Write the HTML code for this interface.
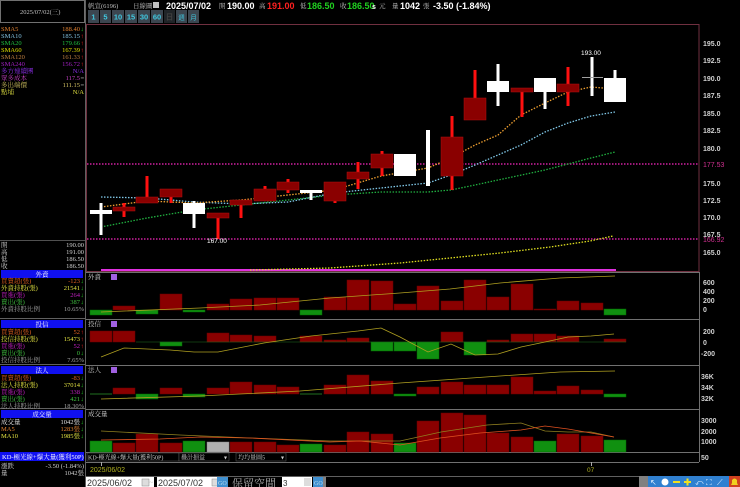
<!DOCTYPE html>
<html><head><meta charset="utf-8">
<style>
html,body{margin:0;padding:0;background:#000;width:740px;height:487px;overflow:hidden}
svg{display:block;font-family:"Liberation Serif","Noto Serif CJK TC",serif;font-size:6.5px}
.b{font-family:"Liberation Sans","Noto Sans CJK TC",sans-serif;font-weight:bold;font-size:9px}
.ax{font-family:"Liberation Sans",sans-serif;font-weight:bold;font-size:7px;fill:#d0d0d0}
</style></head><body>
<svg width="740" height="487" viewBox="0 0 740 487" xmlns="http://www.w3.org/2000/svg">
<rect width="740" height="487" fill="#000"/>
<rect x="0.5" y="0.5" width="84" height="22" fill="#000" stroke="#707070"/>
<text x="20" y="14" fill="#c0c0c0">2025/07/02(三)</text>
<line x1="85.5" y1="0" x2="85.5" y2="487" stroke="#606060"/>
<g text-anchor="start">
<text x="1" y="31" fill="#e08030">SMA5</text><text x="1" y="38" fill="#80c0e0">SMA10</text>
<text x="1" y="45" fill="#20c040">SMA20</text><text x="1" y="52" fill="#e0e000">SMA60</text>
<text x="1" y="59" fill="#c08040">SMA120</text><text x="1" y="66" fill="#a020c0">SMA240</text>
<text x="1" y="73" fill="#9030f0">多方連續團</text><text x="1" y="80" fill="#c040c0">眾多成本</text>
<text x="1" y="87" fill="#d0c060">多出端價</text><text x="1" y="94" fill="#e0e040">點埔</text>
</g>
<g text-anchor="end">
<text x="80" y="31" fill="#e08030">188.40</text><text x="80" y="38" fill="#80c0e0">185.15</text>
<text x="80" y="45" fill="#20c040">179.66</text><text x="80" y="52" fill="#e0e000">167.39</text>
<text x="80" y="59" fill="#c08040">161.33</text><text x="80" y="66" fill="#a020c0">156.72</text>
<text x="84" y="73" fill="#9030f0">N/A</text><text x="80" y="80" fill="#c040c0">117.5</text>
<text x="80" y="87" fill="#d0c060">111.15</text><text x="84" y="94" fill="#e0e040">N/A</text>
</g>
<g>
<text x="80.5" y="31" fill="#20d020">↓</text>
<text x="80.5" y="38" fill="#ff2020">↑</text><text x="80.5" y="45" fill="#ff2020">↑</text>
<text x="80.5" y="52" fill="#ff2020">↑</text><text x="80.5" y="59" fill="#ff2020">↑</text>
<text x="80.5" y="66" fill="#ff2020">↑</text><text x="80.5" y="80" fill="#c0c0c0">=</text><text x="80.5" y="87" fill="#c0c0c0">=</text>
</g>
<line x1="0" y1="240.5" x2="85" y2="240.5" stroke="#505050"/>
<g fill="#d0d0d0">
<text x="1" y="247">開</text><text x="1" y="254">高</text><text x="1" y="261">低</text><text x="1" y="268">收</text>
<g text-anchor="end"><text x="84" y="247">190.00</text><text x="84" y="254">191.00</text><text x="84" y="261">186.50</text><text x="84" y="268">186.50</text></g>
</g>
<g>
<rect x="1" y="270" width="82" height="8" fill="#1010f0"/><text x="42" y="276.5" fill="#fff" text-anchor="middle">外資</text>
<rect x="1" y="320" width="82" height="8" fill="#1010f0"/><text x="42" y="326.5" fill="#fff" text-anchor="middle">投信</text>
<rect x="1" y="366" width="82" height="8" fill="#1010f0"/><text x="42" y="372.5" fill="#fff" text-anchor="middle">法人</text>
<rect x="1" y="410" width="82" height="8" fill="#1010f0"/><text x="42" y="416.5" fill="#fff" text-anchor="middle">成交量</text>
</g>
<line x1="0" y1="318.5" x2="85" y2="318.5" stroke="#606060"/>
<line x1="0" y1="364.5" x2="85" y2="364.5" stroke="#606060"/>
<line x1="0" y1="408.5" x2="85" y2="408.5" stroke="#606060"/>
<g>
<text x="1" y="283" fill="#e06020">買賣超(張)</text><text x="1" y="290" fill="#e0e040">外資持股(張)</text>
<text x="1" y="297" fill="#c020c0">買進(張)</text><text x="1" y="304" fill="#40c040">賣出(張)</text><text x="1" y="311" fill="#a0a0a0">外資持股比例</text>
<g text-anchor="end"><text x="80" y="283" fill="#e06020">-123</text><text x="80" y="290" fill="#e0e040">21541</text>
<text x="80" y="297" fill="#c020c0">264</text><text x="80" y="304" fill="#40c040">387</text><text x="84" y="311" fill="#a0a0a0">10.65%</text></g>
<g fill="#20d020"><text x="80.5" y="283">↓</text><text x="80.5" y="290">↓</text><text x="80.5" y="297">↓</text><text x="80.5" y="304">↓</text></g>
</g>
<g>
<text x="1" y="334" fill="#e06020">買賣超(張)</text><text x="1" y="341" fill="#e0e040">投信持股(張)</text>
<text x="1" y="348" fill="#c020c0">買進(張)</text><text x="1" y="355" fill="#40c040">賣出(張)</text><text x="1" y="362" fill="#a0a0a0">投信持股比例</text>
<g text-anchor="end"><text x="80" y="334" fill="#e06020">52</text><text x="80" y="341" fill="#e0e040">15473</text>
<text x="80" y="348" fill="#c020c0">52</text><text x="80" y="355" fill="#40c040">0</text><text x="84" y="362" fill="#a0a0a0">7.65%</text></g>
<g><text x="80.5" y="334" fill="#ff2020">↑</text><text x="80.5" y="341" fill="#ff2020">↑</text><text x="80.5" y="348" fill="#ff2020">↑</text><text x="80.5" y="355" fill="#20d020">↓</text></g>
</g>
<g>
<text x="1" y="380" fill="#e06020">買賣超(張)</text><text x="1" y="387" fill="#e0e040">法人持股(張)</text>
<text x="1" y="394" fill="#c020c0">買進(張)</text><text x="1" y="401" fill="#40c040">賣出(張)</text><text x="1" y="408" fill="#a0a0a0">法人持股比例</text>
<g text-anchor="end"><text x="80" y="380" fill="#e06020">-83</text><text x="80" y="387" fill="#e0e040">37014</text>
<text x="80" y="394" fill="#c020c0">338</text><text x="80" y="401" fill="#40c040">421</text><text x="84" y="408" fill="#a0a0a0">18.30%</text></g>
<g fill="#20d020"><text x="80.5" y="380">↓</text><text x="80.5" y="387">↓</text><text x="80.5" y="394">↓</text><text x="80.5" y="401">↓</text></g>
</g>
<g>
<text x="1" y="424" fill="#e0e0e0">成交量</text><text x="1" y="431" fill="#e08030">MA5</text><text x="1" y="438" fill="#e0e040">MA10</text>
<g text-anchor="end"><text x="80" y="424" fill="#e0e0e0">1042張</text><text x="80" y="431" fill="#e08030">1283張</text><text x="80" y="438" fill="#e0e040">1985張</text></g>
<g fill="#20d020"><text x="80.5" y="424">↓</text><text x="80.5" y="431">↓</text><text x="80.5" y="438">↓</text></g>
</g>
<rect x="0" y="452" width="84" height="9" fill="#1010f0"/>
<text x="2" y="459" fill="#fff">KD-極光線+爆大量(獲利50P)</text>
<text x="1" y="468" fill="#d0d0d0">漲跌</text><text x="84" y="468" fill="#d0d0d0" text-anchor="end">-3.50 (-1.84%)</text>
<text x="1" y="475" fill="#d0d0d0">量</text><text x="84" y="475" fill="#d0d0d0" text-anchor="end">1042張</text>

<text x="88" y="8" fill="#c0c0c0">帆宣(6196)</text>
<text x="133" y="8" fill="#c0c0c0">日線圖</text>
<rect x="153" y="2" width="6" height="6" fill="#c0c0c0"/>
<text x="166" y="9" class="b" fill="#fff">2025/07/02</text>
<text x="219" y="8" fill="#c0c0c0">開</text><text x="227" y="9" class="b" fill="#fff">190.00</text>
<text x="259" y="8" fill="#c0c0c0">高</text><text x="267" y="9" class="b" fill="#ff2020">191.00</text>
<text x="300" y="8" fill="#c0c0c0">低</text><text x="307" y="9" class="b" fill="#20d020">186.50</text>
<text x="340" y="8" fill="#c0c0c0">收</text><text x="347" y="9" class="b" fill="#20d020">186.50</text>
<text x="372" y="9" class="b" style="font-size:7px" fill="#fff">s</text><text x="379" y="8" fill="#c0c0c0">元</text>
<text x="392" y="8" fill="#c0c0c0">量</text><text x="400" y="9" class="b" fill="#fff">1042</text>
<text x="423" y="8" fill="#c0c0c0">張</text><text x="433" y="9" class="b" fill="#fff">-3.50 (-1.84%)</text>
<g fill="#3c4650">
<rect x="88" y="10" width="11" height="13"/><rect x="100" y="10" width="11" height="13"/><rect x="112" y="10" width="12" height="13"/>
<rect x="125" y="10" width="12" height="13"/><rect x="138" y="10" width="12" height="13"/><rect x="151" y="10" width="12" height="13"/>
<rect x="164" y="10" width="11" height="13" fill="#202428"/><rect x="176" y="10" width="11" height="13"/><rect x="188" y="10" width="11" height="13"/>
</g>
<g fill="#40c8e0" font-family="Liberation Sans,sans-serif" font-weight="bold" font-size="7.5" text-anchor="middle">
<text x="93.5" y="19.5">1</text><text x="105.5" y="19.5">5</text><text x="118" y="19.5">10</text><text x="131" y="19.5">15</text>
<text x="144" y="19.5">30</text><text x="157" y="19.5">60</text><text x="169.5" y="19.5" fill="#404040">日</text>
<text x="181.5" y="19.5" font-size="6.5" font-weight="normal">週</text><text x="193.5" y="19.5" font-size="6.5" font-weight="normal">月</text>
</g>
<rect x="86.5" y="24.5" width="612.5" height="247" fill="none" stroke="#703040"/>
<g>
<text x="703" y="46" class="ax">195.0</text><text x="703" y="63" class="ax">192.5</text><text x="703" y="81" class="ax">190.0</text>
<text x="703" y="98" class="ax">187.5</text><text x="703" y="116" class="ax">185.0</text><text x="703" y="133" class="ax">182.5</text>
<text x="703" y="151" class="ax">180.0</text><text x="703" y="167" class="ax" style="fill:#d03090;font-weight:normal">177.53</text>
<text x="703" y="186" class="ax">175.0</text><text x="703" y="203" class="ax">172.5</text><text x="703" y="220" class="ax">170.0</text>
<text x="703" y="237" class="ax">167.5</text><text x="703" y="242" class="ax" style="fill:#d03090;font-weight:normal">166.92</text>
<text x="703" y="255" class="ax">165.0</text>
<text x="703" y="285" class="ax">600</text><text x="703" y="294" class="ax">400</text><text x="703" y="303" class="ax">200</text><text x="703" y="312" class="ax">0</text>
<text x="703" y="334" class="ax">200</text><text x="703" y="345" class="ax">0</text><text x="701" y="356" class="ax">-200</text>
<text x="701" y="379" class="ax">36K</text><text x="701" y="390" class="ax">34K</text><text x="701" y="401" class="ax">32K</text>
<text x="701" y="423" class="ax">3000</text><text x="701" y="434" class="ax">2000</text><text x="701" y="444" class="ax">1000</text>
<text x="701" y="460" class="ax">50</text>
</g>
<line x1="87" y1="164" x2="699" y2="164" stroke="#d020a0" stroke-width="1.5" stroke-dasharray="1.5 1.5"/>
<line x1="87" y1="239" x2="699" y2="239" stroke="#d020a0" stroke-width="1.5" stroke-dasharray="1.5 1.5"/>
<line x1="101" y1="270" x2="616" y2="270" stroke="#e030e0" stroke-width="2"/>
<polyline fill="none" stroke="#e0e020" stroke-width="1.3" stroke-dasharray="1.5 1.5" points="250,270 330,268 400,263 450,258 500,253 550,247 590,241 613,236"/>
<polyline fill="none" stroke="#20b040" stroke-width="1.3" stroke-dasharray="1.5 1.5" points="101,227 147,218 194,210 241,205 288,200 334,195 381,192 428,192 451,190 475,185 498,180 545,170 591,158 615,152"/>
<polyline fill="none" stroke="#80c8e8" stroke-width="1.3" stroke-dasharray="1.5 1.5" points="101,197 147,198 194,202 241,204 288,202 334,193 381,188 428,183 451,175 475,165 498,155 521,145 545,132 568,123 591,116 615,112"/>
<polyline fill="none" stroke="#f0a030" stroke-width="1.3" stroke-dasharray="1.5 1.5" points="101,207 147,201 194,203 241,200 288,195 334,190 381,176 428,168 451,158 475,145 498,135 521,115 545,103 568,92 591,87 615,89"/>
<g fill="#ff1010">
<rect x="145.5" y="176" width="3" height="27"/><rect x="122.5" y="203" width="3" height="14"/>
<rect x="169.5" y="189" width="3" height="14"/><rect x="216.5" y="213" width="3" height="26"/>
<rect x="239.5" y="200" width="3" height="18"/><rect x="263.5" y="186" width="3" height="15"/>
<rect x="286.5" y="179" width="3" height="14"/><rect x="333.5" y="182" width="3" height="21"/>
<rect x="356.5" y="162" width="3" height="27"/><rect x="380.5" y="151" width="3" height="25"/>
<rect x="450.5" y="116" width="3" height="74"/><rect x="473.5" y="70" width="3" height="50"/>
<rect x="520.5" y="88" width="3" height="29"/><rect x="566.5" y="67" width="3" height="39"/>
</g>
<g fill="#8a0000" stroke="#b01010" stroke-width="0.5">
<rect x="113" y="207" width="22" height="4"/><rect x="136" y="197" width="22" height="6"/>
<rect x="160" y="189" width="22" height="8"/><rect x="207" y="213" width="22" height="5"/>
<rect x="230" y="200" width="22" height="5"/><rect x="254" y="189" width="22" height="12"/>
<rect x="277" y="182" width="22" height="8"/><rect x="324" y="182" width="22" height="19"/>
<rect x="347" y="172" width="22" height="7"/><rect x="371" y="154" width="22" height="14"/>
<rect x="441" y="137" width="22" height="39"/><rect x="464" y="98" width="22" height="22"/>
<rect x="511" y="88" width="22" height="4"/><rect x="557" y="84" width="22" height="8"/>
</g>
<g fill="#fff">
<rect x="99.5" y="203" width="3" height="32"/><rect x="90" y="210" width="22" height="4"/>
<rect x="192.5" y="201" width="3" height="27"/><rect x="183" y="203" width="22" height="11"/>
<rect x="309.5" y="190" width="3" height="10"/><rect x="300" y="190" width="22" height="3"/>
<rect x="394" y="154" width="22" height="22"/>
<rect x="426" y="130" width="4" height="56"/>
<rect x="496.5" y="64" width="3" height="42"/><rect x="487" y="81" width="22" height="11"/>
<rect x="543.5" y="78" width="3" height="31"/><rect x="534" y="78" width="22" height="14"/>
<rect x="590.5" y="57" width="3" height="39"/>
<rect x="613.5" y="70" width="3" height="10"/><rect x="604" y="78" width="22" height="24"/>
</g>
<line x1="582" y1="77.5" x2="603" y2="77.5" stroke="#a0a0a0"/>
<text x="581" y="55" fill="#fff" font-family="Liberation Sans,sans-serif" font-size="6.5">193.00</text>
<text x="207" y="243" fill="#fff" font-family="Liberation Sans,sans-serif" font-size="6.5">167.00</text>

<g stroke="#707070">
<line x1="86" y1="272.5" x2="699" y2="272.5"/><line x1="86" y1="319.5" x2="699" y2="319.5"/>
<line x1="86" y1="365.5" x2="699" y2="365.5"/><line x1="86" y1="409.5" x2="699" y2="409.5"/>
<line x1="86" y1="452.5" x2="699" y2="452.5"/><line x1="86" y1="462.5" x2="699" y2="462.5"/>
<line x1="699.5" y1="272" x2="699.5" y2="462"/>
</g>
<g fill="#d0d0d0">
<text x="88" y="279">外資</text><text x="88" y="326">投信</text><text x="88" y="372">法人</text><text x="88" y="416">成交量</text>
</g>
<g fill="#a060e0"><rect x="111" y="274" width="6" height="6"/><rect x="111" y="321" width="6" height="6"/><rect x="111" y="367" width="6" height="6"/></g>

<g stroke="#600" stroke-width="0.5">
<g fill="#8a0000">
<rect x="113" y="306" width="22" height="4"/><rect x="160" y="294" width="22" height="16"/>
<rect x="207" y="304" width="22" height="6"/><rect x="230" y="299" width="22" height="11"/>
<rect x="254" y="298" width="22" height="12"/><rect x="277" y="298" width="22" height="12"/>
<rect x="324" y="297" width="22" height="13"/><rect x="347" y="280" width="22" height="30"/>
<rect x="371" y="281" width="22" height="29"/><rect x="394" y="304" width="22" height="6"/>
<rect x="417" y="286" width="22" height="24"/><rect x="441" y="301" width="22" height="9"/>
<rect x="464" y="280" width="22" height="30"/><rect x="487" y="297" width="22" height="13"/>
<rect x="511" y="284" width="22" height="26"/><rect x="534" y="309" width="22" height="1"/>
<rect x="557" y="301" width="22" height="9"/><rect x="581" y="303" width="22" height="7"/>
</g>
<g fill="#109010" stroke="#060">
<rect x="90" y="310" width="22" height="5"/><rect x="136" y="310" width="22" height="4"/>
<rect x="183" y="310" width="22" height="2"/><rect x="300" y="310" width="22" height="5"/>
<rect x="604" y="309" width="22" height="6"/>
</g>
</g>
<polyline fill="none" stroke="#b0a020" stroke-width="0.8" points="101,312 200,308 260,305 330,298 400,293 450,289 500,283 560,278 615,276"/>
<g stroke="#600" stroke-width="0.5">
<g fill="#8a0000">
<rect x="90" y="331" width="22" height="11"/><rect x="113" y="331" width="22" height="11"/>
<rect x="207" y="333" width="22" height="9"/><rect x="230" y="335" width="22" height="7"/>
<rect x="254" y="336" width="22" height="6"/><rect x="300" y="336" width="22" height="6"/>
<rect x="324" y="340" width="22" height="2"/><rect x="347" y="338" width="22" height="4"/>
<rect x="441" y="332" width="22" height="10"/><rect x="487" y="340" width="22" height="2"/>
<rect x="511" y="334" width="22" height="8"/><rect x="534" y="334" width="22" height="8"/>
<rect x="557" y="336" width="22" height="6"/><rect x="604" y="339" width="22" height="3"/>
</g>
<g fill="#109010" stroke="#060">
<rect x="160" y="342" width="22" height="4"/><rect x="371" y="342" width="22" height="9"/>
<rect x="394" y="342" width="22" height="9"/><rect x="417" y="342" width="22" height="17"/>
<rect x="464" y="342" width="22" height="13"/>
</g>
</g>
<line x1="136" y1="342" x2="626" y2="342" stroke="#207020" stroke-width="0.6"/>
<polyline fill="none" stroke="#b0a020" stroke-width="0.8" points="101,357 124,348 170,350 194,352 218,352 264,343 311,336 358,331 381,328 400,337 428,352 451,344 475,355 498,354 521,347 545,342 568,337 591,336 614,334"/>
<g stroke="#600" stroke-width="0.5">
<g fill="#8a0000">
<rect x="113" y="388" width="22" height="6"/><rect x="160" y="388" width="22" height="6"/>
<rect x="207" y="388" width="22" height="6"/><rect x="230" y="382" width="22" height="12"/>
<rect x="254" y="385" width="22" height="9"/><rect x="277" y="387" width="22" height="7"/>
<rect x="324" y="385" width="22" height="9"/><rect x="347" y="375" width="22" height="19"/>
<rect x="371" y="381" width="22" height="13"/><rect x="417" y="387" width="22" height="7"/>
<rect x="441" y="382" width="22" height="12"/><rect x="464" y="385" width="22" height="9"/>
<rect x="487" y="385" width="22" height="9"/><rect x="511" y="377" width="22" height="17"/>
<rect x="534" y="391" width="22" height="3"/><rect x="557" y="386" width="22" height="8"/>
<rect x="581" y="390" width="22" height="4"/>
</g>
<g fill="#109010" stroke="#060">
<rect x="136" y="394" width="22" height="5"/><rect x="183" y="394" width="22" height="3"/>
<rect x="394" y="394" width="22" height="2"/><rect x="604" y="394" width="22" height="3"/>
</g>
</g>
<line x1="90" y1="394" x2="112" y2="394" stroke="#207020"/><line x1="300" y1="394" x2="322" y2="394" stroke="#207020"/>
<polyline fill="none" stroke="#b0a020" stroke-width="0.8" points="101,399 200,396 300,391 400,383 500,376 560,372 615,371"/>
<g stroke="#600" stroke-width="0.5">
<g fill="#8a0000">
<rect x="113" y="443" width="22" height="9"/><rect x="136" y="434" width="22" height="18"/>
<rect x="160" y="443" width="22" height="9"/><rect x="230" y="442" width="22" height="10"/>
<rect x="254" y="442" width="22" height="10"/><rect x="277" y="445" width="22" height="7"/>
<rect x="324" y="445" width="22" height="7"/><rect x="347" y="432" width="22" height="20"/>
<rect x="371" y="434" width="22" height="18"/><rect x="417" y="421" width="22" height="31"/>
<rect x="441" y="413" width="22" height="39"/><rect x="464" y="415" width="22" height="37"/>
<rect x="487" y="433" width="22" height="19"/><rect x="511" y="437" width="22" height="15"/>
<rect x="557" y="434" width="22" height="18"/><rect x="581" y="436" width="22" height="16"/>
</g>
<g fill="#109010" stroke="#060">
<rect x="90" y="441" width="22" height="11"/><rect x="183" y="441" width="22" height="11"/>
<rect x="300" y="444" width="22" height="8"/><rect x="394" y="443" width="22" height="9"/>
<rect x="534" y="441" width="22" height="11"/><rect x="604" y="440" width="22" height="12"/>
</g>
<rect x="207" y="442" width="22" height="10" fill="#b0b0b0" stroke="#888"/>
</g>
<polyline fill="none" stroke="#908020" stroke-width="0.8" points="101,431 180,435 250,438 330,441 400,441 441,432 487,425 521,423 545,431 568,432 591,432 614,437"/>
<polyline fill="none" stroke="#e05020" stroke-width="0.8" points="101,440 160,439 200,437 250,438 330,442 360,441 400,445 440,438 480,433 521,430 545,426 568,429 591,433 614,437"/>

<line x1="591.5" y1="462" x2="591.5" y2="466" stroke="#aaa"/>
<text x="587" y="472" fill="#b0b020" font-family="Liberation Sans,sans-serif" font-size="6.5">07</text>
<line x1="101.5" y1="462" x2="101.5" y2="466" stroke="#aaa"/>
<text x="90" y="472" fill="#b0b020" font-family="Liberation Sans,sans-serif" font-size="7">2025/06/02</text>
<rect x="87" y="453" width="92" height="8" fill="#000" stroke="#606060" stroke-width="0.5"/>
<text x="88" y="459.5" fill="#d0d0d0" font-size="6">KD-極光線+爆大量(獲利50P)</text>
<rect x="179" y="453" width="50" height="8" fill="#000" stroke="#606060" stroke-width="0.5"/>
<text x="181" y="459.5" fill="#d0d0d0" font-size="6">疊計損益</text><text x="224" y="459.5" fill="#d0d0d0" font-size="6">▾</text>
<rect x="236" y="453" width="50" height="8" fill="#000" stroke="#606060" stroke-width="0.5"/>
<text x="238" y="459.5" fill="#d0d0d0" font-size="6">均均量圖5</text><text x="281" y="459.5" fill="#d0d0d0" font-size="6">▾</text>
<line x1="86" y1="476.5" x2="740" y2="476.5" stroke="#606060"/>
<rect x="86" y="477" width="68" height="10" fill="#fff"/>
<text x="87" y="486" fill="#333" font-family="Liberation Sans,sans-serif" font-size="9">2025/06/02</text>
<rect x="142" y="479" width="7" height="7" fill="#ddd" stroke="#888" stroke-width="0.5"/>
<text x="149" y="485" fill="#ccc" font-size="8">~</text>
<rect x="157" y="477" width="68" height="10" fill="#fff"/>
<text x="158" y="486" fill="#333" font-family="Liberation Sans,sans-serif" font-size="9">2025/07/02</text>
<rect x="212" y="479" width="7" height="7" fill="#ddd" stroke="#888" stroke-width="0.5"/>
<rect x="217" y="477" width="11" height="10" fill="#4090d0"/>
<text x="218" y="485" fill="#bde" font-size="6">GO</text>
<text x="232" y="487" fill="#b0b0b0" font-size="11">保留空間</text>
<rect x="282" y="477" width="30" height="10" fill="#fff"/>
<text x="283" y="486" fill="#333" font-family="Liberation Sans,sans-serif" font-size="8">3</text>
<rect x="304" y="478" width="7" height="8" fill="#ddd"/>
<rect x="313" y="477" width="10" height="10" fill="#4090d0"/>
<text x="314" y="485" fill="#bde" font-size="6">GO</text>
<rect x="323" y="477" width="3" height="10" fill="#808080"/>
<rect x="639" y="476" width="9" height="11" fill="#808080"/>
<rect x="648" y="476" width="92" height="11" fill="#3080d0"/>
<g fill="#e0f0ff" font-family="Liberation Sans,sans-serif" font-size="8">
<text x="650" y="485">↖</text><circle cx="665" cy="482" r="3.5" fill="#fff"/><rect x="673" y="481" width="7" height="2" fill="#f0e020"/>
<rect x="684" y="481" width="7" height="2" fill="#f0e020"/><rect x="686.5" y="478.5" width="2" height="7" fill="#f0e020"/>
<text x="695" y="485">⤺</text><text x="706" y="485">⛶</text><text x="717" y="485">⟋</text>
</g>
<rect x="729" y="476" width="11" height="11" fill="#d04020"/>
<path d="M731,485 L738,485 L737,483 L737,480 Q734.5,477 732,480 L732,483 Z" fill="#f0d020"/>
</svg>
</body></html>
